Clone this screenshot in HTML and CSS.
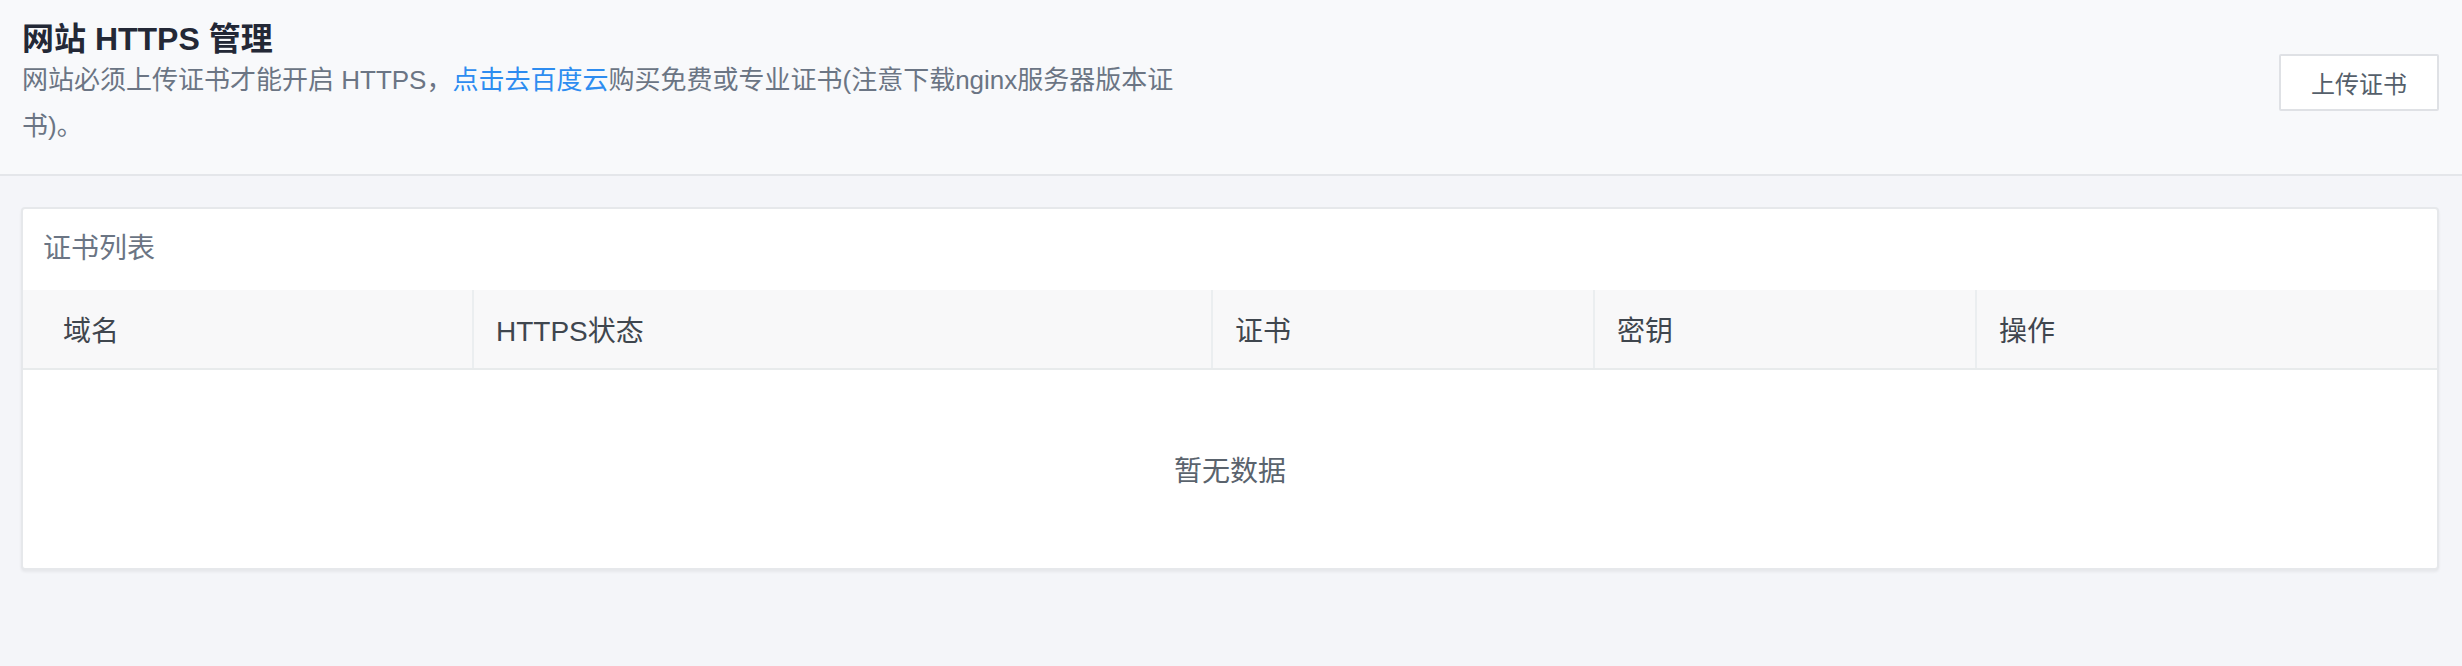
FILE: index.html
```html
<!DOCTYPE html>
<html lang="zh-CN">
<head>
  <meta charset="UTF-8" />
  <meta name="viewport" content="width=device-width, initial-scale=1" />
  <title>网站 HTTPS 管理</title>
  <link rel="stylesheet" href="styles.css">
</head>
<body>
  <header class="page-header">
    <div class="page-header-text">
      <h1 class="page-title">网站 HTTPS 管理</h1>
      <p class="page-desc">网站必须上传证书才能开启 HTTPS，<a href="#" class="link">点击去百度云</a>购买免费或专业证书(注意下载nginx服务器版本证书)。</p>
    </div>
    <button type="button" class="btn">上传证书</button>
  </header>

  <main class="page-body">
    <div class="card">
      <div class="card-head">证书列表</div>
      <table class="table">
        <colgroup>
          <col style="width: 450px">
          <col style="width: 739px">
          <col style="width: 382px">
          <col style="width: 382px">
          <col>
        </colgroup>
        <thead>
          <tr>
            <th class="first">域名</th>
            <th>HTTPS状态</th>
            <th>证书</th>
            <th>密钥</th>
            <th class="last">操作</th>
          </tr>
        </thead>
        <tbody>
          <tr>
            <td colspan="5" class="empty">暂无数据</td>
          </tr>
        </tbody>
      </table>
    </div>
  </main>
</body>
</html>
```

FILE: styles.css
```css
body {
  margin: 0;
  background: #f4f5f9;
  font-family: "Helvetica Neue", Helvetica, "PingFang SC", "Liberation Sans", "Noto Sans CJK SC", sans-serif;
  color: #515a6e;
  min-height: 100vh;
}
.page-header {
  display: flex;
  justify-content: space-between;
  align-items: flex-start;
  background: #f8f9fb;
  border-bottom: 2px solid #e4e6ea;
  padding: 21px 23px 25px 22px;
}
.page-title {
  margin: 0;
  font-size: 32px;
  line-height: 36px;
  font-weight: 600;
  color: #232836;
}
.page-desc {
  margin: 0;
  max-width: 1170px;
  font-size: 26px;
  line-height: 46px;
  color: #6b7584;
}
.link {
  color: #2d8cf0;
  text-decoration: none;
}
.btn {
  margin-top: 33px;
  height: 57px;
  padding: 0 30px;
  background: #fff;
  border: 2px solid #dfe1e5;
  border-radius: 2px;
  font-family: inherit;
  font-size: 24px;
  color: #555f6b;
  cursor: pointer;
}
.page-body {
  padding: 31px 23px 0 21px;
}
.card {
  background: #fff;
  border: 2px solid #e6e8eb;
  border-radius: 4px;
  box-shadow: 0 2px 3px rgba(0, 0, 0, 0.06);
}
.card-head {
  padding: 26px 20px 27px 20px;
  font-size: 28px;
  line-height: 28px;
  color: #6b7584;
}
.table {
  width: 100%;
  table-layout: fixed;
  border-collapse: collapse;
}
.table th {
  height: 78px;
  padding: 0 22px;
  background: #f8f8f9;
  border-right: 2px solid #ebeef0;
  border-bottom: 2px solid #e8ebec;
  text-align: left;
  font-size: 28px;
  font-weight: 400;
  color: #3f464e;
}
.table th.first {
  padding-left: 40px;
}
.table th.last {
  border-right: none;
}
.empty {
  height: 198px;
  padding: 0;
  text-align: center;
  font-size: 28px;
  color: #5a636d;
}
```
